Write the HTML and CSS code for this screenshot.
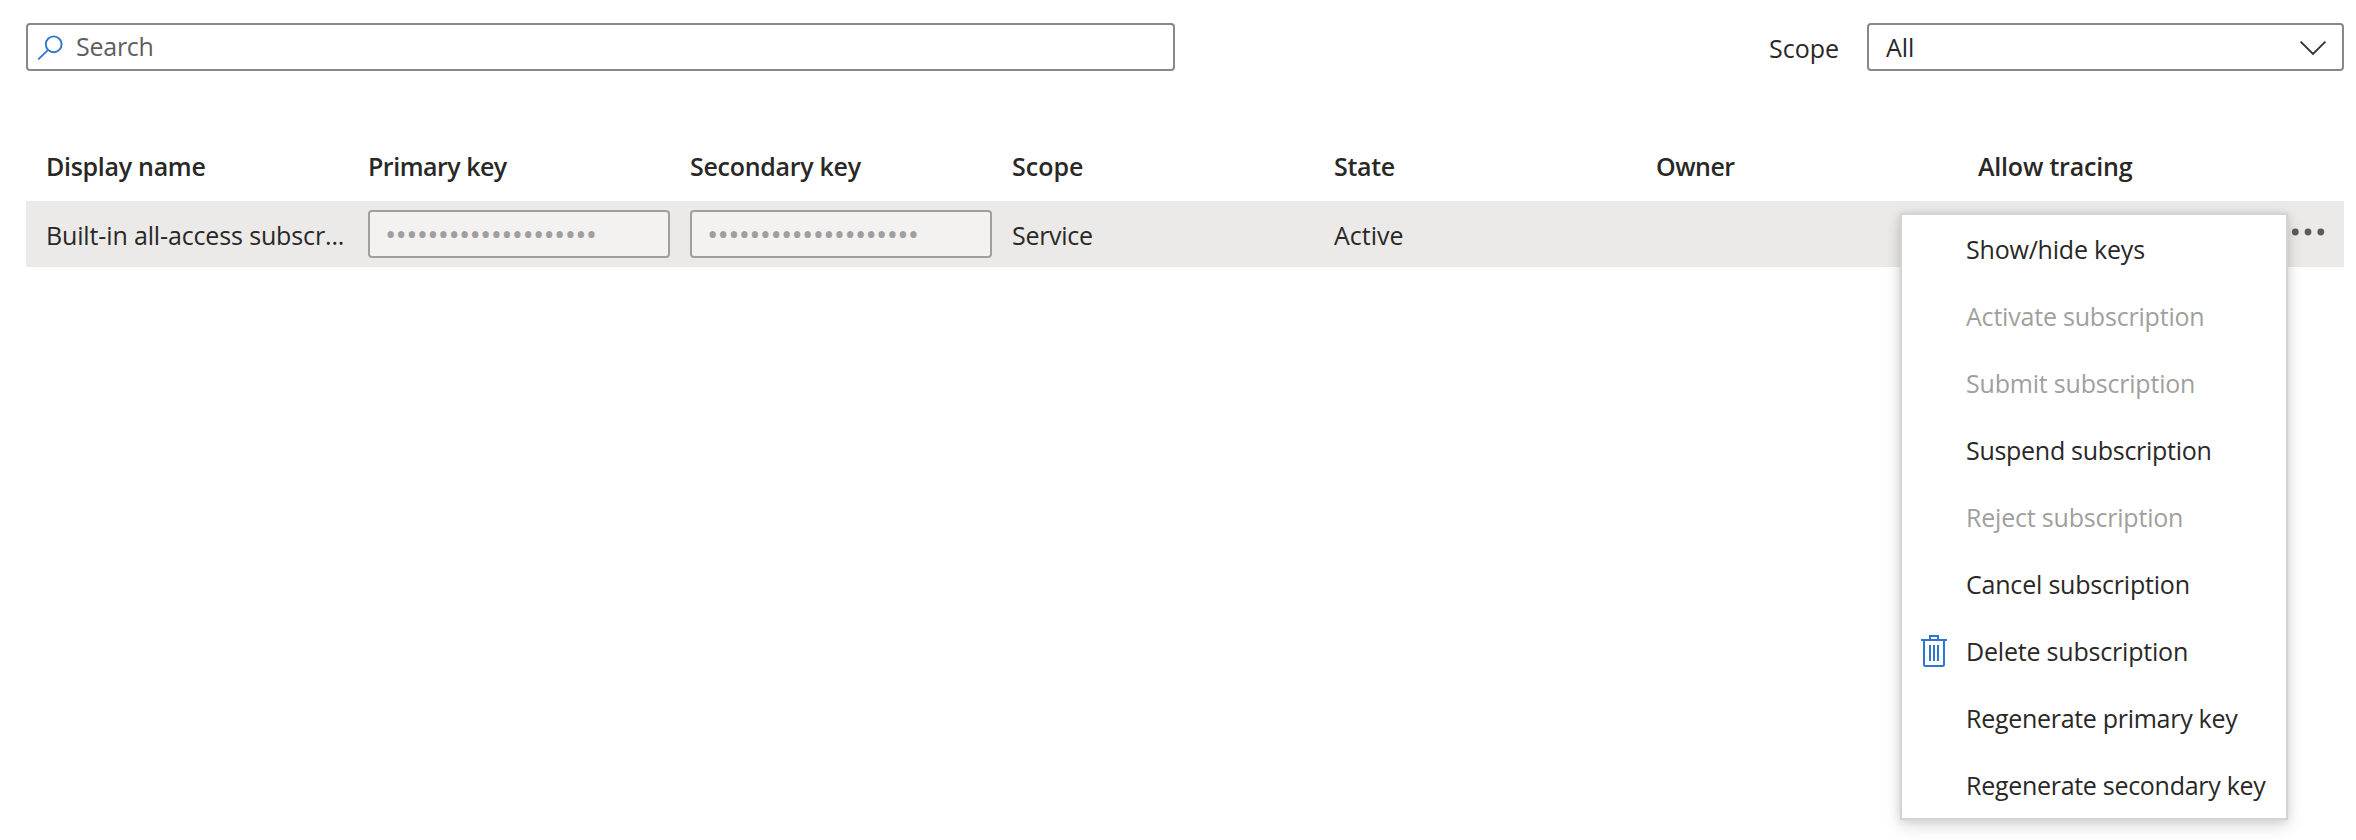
FILE: index.html
```
<!DOCTYPE html>
<html lang="en">
<head>
<meta charset="utf-8">
<title>Subscriptions</title>
<link rel="stylesheet" href="styles.css">
</head>
<body>
<main class="page">
  <div class="toolbar">
    <div class="search">
      <svg class="search-icon" width="28" height="28" viewBox="0 0 28 28"><circle cx="17.7" cy="10.3" r="7.9"/><path d="M12.1 15.9 2.3 25.4"/></svg>
      <span class="placeholder">Search</span>
    </div>
    <div class="filter">
      <span class="filter-label">Scope</span>
      <div class="select">
        <span class="select-value">All</span>
        <svg class="chevron" width="28" height="16" viewBox="0 0 28 16"><path d="M1.6 1.6 14 14 26.4 1.6"/></svg>
      </div>
    </div>
  </div>

  <div class="table">
    <div class="row head">
      <span class="tight">Display name</span>
      <span class="tighter">Primary key</span>
      <span class="tight">Secondary key</span>
      <span>Scope</span>
      <span class="tight">State</span>
      <span class="tighter">Owner</span>
      <span class="snug">Allow tracing</span>
    </div>
    <div class="row item">
      <span class="cell name">Built-in all-access subscr...</span>
      <span class="key">••••••••••••••••••••</span>
      <span class="key">••••••••••••••••••••</span>
      <span class="cell tight">Service</span>
      <span class="cell">Active</span>
      <span class="cell"></span>
      <span class="cell"></span>
      <svg class="more" width="34" height="8" viewBox="0 0 34 8"><circle cx="4.3" cy="4" r="3.4"/><circle cx="17" cy="4" r="3.4"/><circle cx="29.8" cy="4" r="3.4"/></svg>
    </div>
  </div>

  <div class="menu">
    <div class="option snug">Show/hide keys</div>
    <div class="option snug disabled">Activate subscription</div>
    <div class="option snug disabled">Submit subscription</div>
    <div class="option tight">Suspend subscription</div>
    <div class="option snug disabled">Reject subscription</div>
    <div class="option snug">Cancel subscription</div>
    <div class="option snug">
      <svg class="trash" width="26" height="32" viewBox="0 0 26 32"><path d="M0 5H26M9 5V1H17V5M3 5V29.5Q3 31 4.5 31H21.5Q23 31 23 29.5V5M9 10V26M13 10V26M17 10V26"/></svg>
      Delete subscription
    </div>
    <div class="option tight">Regenerate primary key</div>
    <div class="option tight">Regenerate secondary key</div>
  </div>
</main>
</body>
</html>
```

FILE: styles.css
```
* { box-sizing: border-box; }
body {
  margin: 0;
  background: #fff;
  color: #292827;
  font: 25px/34px "Open Sans", "Noto Sans", sans-serif;
}
.page {
  position: relative;
  height: 840px;
  padding: 23px 12px 0 26px;
  overflow: hidden;
}
.snug { letter-spacing: -0.2px; }
.tight { letter-spacing: -0.29px; }
.tighter { letter-spacing: -0.5px; }

.toolbar {
  display: flex;
  justify-content: space-between;
}
.search, .select {
  display: flex;
  align-items: center;
  height: 48px;
  border: 2px solid #8a8886;
  border-radius: 4px;
}
.search { width: 1149px; padding-left: 8px; }
.search-icon, .trash {
  fill: none;
  stroke: #2f76d2;
}
.search-icon { stroke-width: 1.9; margin-top: 2px; }
.placeholder {
  margin: -3px 0 0 12px;
  color: #605e5c;
  letter-spacing: -0.25px;
}
.filter { display: flex; align-items: center; }
.filter-label { width: 98px; padding-top: 1px; }
.select {
  width: 477px;
  justify-content: space-between;
  padding: 0 15px 0 17px;
}
.chevron { fill: none; stroke: #323130; stroke-width: 1.8; margin-top: 2px; }

.table { margin-top: 62px; }
.row {
  position: relative;
  display: grid;
  grid-template-columns: repeat(7, 302px);
  column-gap: 20px;
  align-items: center;
  padding-left: 20px;
}
.head { height: 68px; padding-bottom: 2px; font-weight: 600; }
.item { height: 66px; background: #ebeae8; }
.cell { padding-top: 1px; white-space: nowrap; }
.name { letter-spacing: -0.14px; }
.key {
  height: 48px;
  padding-left: 15px;
  border: 2px solid #a19f9d;
  border-radius: 4px;
  background: #f3f2f1;
  color: #a19f9d;
  font-size: 30px;
  line-height: 44px;
  letter-spacing: -0.71px;
}
.more {
  position: absolute;
  right: 19px;
  top: 27px;
  fill: #5d5b59;
}

.menu {
  position: absolute;
  left: 1900px;
  top: 213px;
  width: 388px;
  border: 2px solid #d4d4d4;
  background: #fff;
  box-shadow: 0 6px 16px rgba(0, 0, 0, .14), 0 1px 8px rgba(0, 0, 0, .1);
}
.option {
  position: relative;
  height: 67px;
  padding: 17px 0 0 64px;
  white-space: nowrap;
}
.disabled { color: #a19f9d; }
.trash {
  position: absolute;
  left: 19px;
  top: 18px;
  stroke-width: 2;
}
```
